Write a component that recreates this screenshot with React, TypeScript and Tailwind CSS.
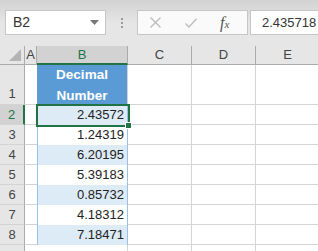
import React from 'react';

const rows = [
  { n: 2, v: '2.43572' },
  { n: 3, v: '1.24319' },
  { n: 4, v: '6.20195' },
  { n: 5, v: '5.39183' },
  { n: 6, v: '0.85732' },
  { n: 7, v: '4.18312' },
  { n: 8, v: '7.18471' },
];

const EmptyCells = () => (
  <>
    <div className="w-[64px] shrink-0 border-r border-b border-[#d4d4d4]" />
    <div className="w-[64px] shrink-0 border-r border-b border-[#d4d4d4]" />
    <div className="w-[64px] shrink-0 border-r border-b border-[#d4d4d4]" />
  </>
);

export default function App() {
  return (
    <div className="w-[318px] h-[251px] overflow-hidden bg-white font-['Liberation_Sans',sans-serif] text-[13px] text-[#222]">
      {/* Formula bar */}
      <div className="h-[46px] bg-gradient-to-b from-[#d2d2d2] via-[#e6e6e6] to-[#e6e6e6] flex items-start pt-[10px] pl-[5px]">
        <div className="w-[101px] h-[25px] shrink-0 bg-white border border-[#c6c6c6] flex items-center justify-between pl-[7px] pr-[6px] text-[14px] text-[#333]">
          <span>B2</span>
          <svg width="9" height="5" viewBox="0 0 9 5"><path d="M0 0h9L4.5 5z" fill="#777" /></svg>
        </div>
        <div className="w-[31px] h-[25px] shrink-0 flex flex-col items-center justify-center gap-[2px]">
          <span className="w-[2px] h-[2px] bg-[#9a9a9a]" />
          <span className="w-[2px] h-[2px] bg-[#9a9a9a]" />
          <span className="w-[2px] h-[2px] bg-[#9a9a9a]" />
        </div>
        <div className="w-[111px] h-[25px] shrink-0 bg-[#fafafa] border border-[#c6c6c6] flex items-center pl-[12px]">
          <svg width="11" height="11" viewBox="0 0 11 11"><path d="M0.5 0.5l10 10M10.5 0.5l-10 10" stroke="#bdbdbd" strokeWidth="1.4" /></svg>
          <svg className="ml-[24px]" width="12" height="10" viewBox="0 0 12 10"><path d="M0.5 5.5l3.5 3.5L11.5 0.8" fill="none" stroke="#bdbdbd" strokeWidth="1.4" /></svg>
          <span className="ml-[23px] font-['Liberation_Serif',serif] italic text-[#555] text-[16px] leading-none">f<span className="text-[11px]">x</span></span>
        </div>
        <div className="ml-[2px] flex-1 h-[25px] bg-white border border-[#c6c6c6] border-r-0 flex items-center pl-[11px] text-[13px] text-[#333] whitespace-nowrap">
          2.435718
        </div>
      </div>

      {/* Sheet */}
      <div className="relative">
        {/* Column headers */}
        <div className="flex h-[19px] bg-[#e6e6e6] text-[#444]">
          <div className="w-[25px] shrink-0 border-r border-b border-[#ababab] flex items-end justify-end pr-[3px] pb-[3px]">
            <svg width="12" height="12" viewBox="0 0 12 12"><path d="M12 0v12H0z" fill="#b4b4b4" /></svg>
          </div>
          <div className="w-[12px] shrink-0 border-r border-b border-[#ababab] flex items-center justify-center">A</div>
          <div className="w-[91px] shrink-0 bg-[#d2d2d2] border-r border-[#ababab] border-b-2 border-b-[#217346] flex items-center justify-center text-[#217346]">B</div>
          <div className="w-[64px] shrink-0 border-r border-b border-[#ababab] flex items-center justify-center">C</div>
          <div className="w-[64px] shrink-0 border-r border-b border-[#ababab] flex items-center justify-center">D</div>
          <div className="w-[64px] shrink-0 border-r border-b border-[#ababab] flex items-center justify-center">E</div>
        </div>

        {/* Row 1 */}
        <div className="flex h-[40px]">
          <div className="w-[25px] shrink-0 bg-[#e6e6e6] border-r border-[#ababab] border-b border-b-[#d4d4d4] flex items-end justify-center pb-[1px] text-[#444]">1</div>
          <div className="w-[12px] shrink-0 border-b border-[#d4d4d4]" />
          <div className="w-[91px] shrink-0 bg-[#5b9bd5] border-r border-[#d4d4d4] flex flex-col items-center justify-center text-white font-bold text-[13.5px] leading-[21px]">
            <span>Decimal</span>
            <span>Number</span>
          </div>
          <EmptyCells />
        </div>

        {/* Data rows */}
        {rows.map((r) => (
          <div key={r.n} className="flex h-[20px]">
            <div
              className={
                r.n === 2
                  ? 'w-[25px] shrink-0 bg-[#d2d2d2] border-r-2 border-[#217346] border-b border-b-[#d4d4d4] flex items-center justify-center text-[#217346]'
                  : 'w-[25px] shrink-0 bg-[#e6e6e6] border-r border-[#ababab] border-b border-b-[#d4d4d4] flex items-center justify-center text-[#444]'
              }
            >
              {r.n}
            </div>
            <div className="w-[12px] shrink-0 border-b border-[#d4d4d4]" />
            <div
              className={
                r.n % 2 === 0
                  ? 'w-[91px] shrink-0 bg-[#ddebf7] border-x border-[#9bc2e6] flex items-center justify-end pr-[3px]'
                  : 'w-[91px] shrink-0 bg-white border-x border-[#9bc2e6] flex items-center justify-end pr-[3px]'
              }
            >
              {r.v}
            </div>
            <EmptyCells />
          </div>
        ))}

        {/* Row 9 */}
        <div className="flex h-[20px]">
          <div className="w-[25px] shrink-0 bg-[#e6e6e6] border-r border-[#ababab]" />
          <div className="w-[12px] shrink-0" />
          <div className="w-[91px] shrink-0 border-r border-[#d4d4d4]" />
          <div className="w-[64px] shrink-0 border-r border-[#d4d4d4]" />
          <div className="w-[64px] shrink-0 border-r border-[#d4d4d4]" />
          <div className="w-[64px] shrink-0 border-r border-[#d4d4d4]" />
        </div>

        {/* Active cell */}
        <div className="absolute left-[36px] top-[58px] w-[94px] h-[23px] border-2 border-[#217346]" />
        <div className="absolute left-[125px] top-[76px] w-[7px] h-[7px] bg-[#217346] border border-white" />
      </div>
    </div>
  );
}
